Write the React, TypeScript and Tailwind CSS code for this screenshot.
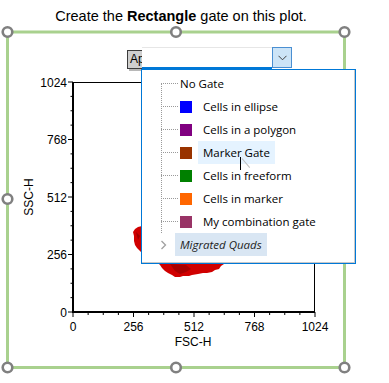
import React from "react";

const X0 = 73;
const X1 = 315;
const Y0 = 312;
const Y1 = 82;
const xs = (v: number) => X0 + (v / 1024) * (X1 - X0);
const ys = (v: number) => Y0 - (v / 1024) * (Y0 - Y1);
const majors = [0, 256, 512, 768, 1024];
const minors: number[] = [];
for (let v = 64; v < 1024; v += 64) if (v % 256 !== 0) minors.push(v);

function Plot() {
  const handles: [number, number][] = [
    [7.5, 32],
    [176, 32],
    [344.5, 32],
    [7.5, 199],
    [344.5, 199],
    [7.5, 367.5],
    [176, 367.5],
    [344.5, 367.5],
  ];
  const blob =
    "M142,226 L138,227 L135,229 L133,232 L134,236 L134,241 L135,245 L137,248 L139,250 L142,253 L150,258 L158,263 L160,265 L162,268 L165,271 L168,273 L172,275 L175,277 L180,277 L183,276 L189,276 L192,275 L198,274 L203,273 L207,273 L212,272 L215,270 L219,269 L221,266 L224,264 L230,256 L236,246 L238,232 L228,222 L200,216 L170,216 Z";
  return (
    <svg
      className="absolute left-0 top-0"
      width={389}
      height={383}
      viewBox="0 0 389 383"
      style={{ fontFamily: '"Liberation Sans", Arial, sans-serif' }}
    >
      <path d={blob} fill="#d00000" />
      <path d="M170,264 L175,271 L180,274 L186,272 L191,269 L186,265 Z" fill="#a80000" />
      <path d="M136,232 L138,240 L140,236 Z" fill="#a00000" />
      <line x1={X0} y1={Y1 + 0.5} x2={X1} y2={Y1 + 0.5} stroke="#000" strokeWidth={1} />
      <line x1={X1 - 0.5} y1={Y1} x2={X1 - 0.5} y2={Y0} stroke="#000" strokeWidth={1} />
      <line x1={X0} y1={Y1} x2={X0} y2={Y0 + 1} stroke="#000" strokeWidth={2} />
      <line x1={X0 - 1} y1={Y0} x2={X1} y2={Y0} stroke="#000" strokeWidth={2} />
      {majors.map((v) => (
        <g key={"ym" + v}>
          <line x1={X0 - 5} y1={ys(v)} x2={X0} y2={ys(v)} stroke="#000" strokeWidth={1} />
          <text x={67} y={ys(v) + 4.5} fontSize={12} textAnchor="end" fill="#000">
            {v}
          </text>
          <line x1={xs(v)} y1={Y0} x2={xs(v)} y2={Y0 + 5} stroke="#000" strokeWidth={1} />
          <text x={xs(v)} y={331} fontSize={12} textAnchor="middle" fill="#000">
            {v}
          </text>
        </g>
      ))}
      {minors.map((v) => (
        <g key={"mn" + v}>
          <line x1={X0 - 2.5} y1={ys(v)} x2={X0} y2={ys(v)} stroke="#000" strokeWidth={1} />
          <line x1={xs(v)} y1={Y0} x2={xs(v)} y2={Y0 + 3} stroke="#000" strokeWidth={1} />
        </g>
      ))}
      <text x={193} y={346} fontSize={12} textAnchor="middle" fill="#000">
        FSC-H
      </text>
      <text
        x={0}
        y={0}
        fontSize={12}
        textAnchor="middle"
        fill="#000"
        transform="translate(33 197) rotate(-90)"
      >
        SSC-H
      </text>
      <rect x={7.5} y={32} width={337} height={335.5} fill="none" stroke="#a9d18e" strokeWidth={3} />
      {handles.map(([cx, cy], i) => (
        <circle key={i} cx={cx} cy={cy} r={4.8} fill="#fff" stroke="#808080" strokeWidth={2.6} />
      ))}
    </svg>
  );
}

type Item = { label: string; color?: string; hover?: boolean };
const items: Item[] = [
  { label: "No Gate" },
  { label: "Cells in ellipse", color: "#0000ff" },
  { label: "Cells in a polygon", color: "#800080" },
  { label: "Marker Gate", color: "#993300", hover: true },
  { label: "Cells in freeform", color: "#008000" },
  { label: "Cells in marker", color: "#ff6600" },
  { label: "My combination gate", color: "#993366" },
];

function Dropdown() {
  return (
    <>
      <div className="absolute left-[127px] top-[50px] w-[17px] h-[19px] bg-[#cfcfcf] border border-[#3c3c3c] shadow-[2px_2px_0_#b8b8b8] text-[12px] leading-[17px] pl-[2px] text-black font-['Liberation_Sans',Arial,sans-serif]">
        Ap
      </div>
      <div className="absolute left-[142px] top-[47px] w-[150px] h-[22px] flex">
        <div className="flex-1 bg-white border-t border-[#e6e6e6] border-b-2 border-b-[#0078d7]" />
        <div className="w-[20px] h-[21px] bg-[#cce4f7] border border-[#4a8fd2] flex items-center justify-center">
          <svg width="9" height="6" viewBox="0 0 9 6">
            <path d="M0.5 0.8 L4.5 4.8 L8.5 0.8" fill="none" stroke="#404040" strokeWidth={1} />
          </svg>
        </div>
      </div>
      <div className="absolute left-[141px] top-[69px] w-[215px] h-[195px] border border-[#0078d7] bg-white shadow-[inset_-1px_-1px_0_#c8c8c8] font-['Open_Sans','Noto_Sans',sans-serif] text-[11.5px] text-black">
        <div className="absolute left-[19px] top-[14px] h-[149px] border-l border-dotted border-[#9a9a9a]" />
        <div className="flex flex-col pt-[2px]">
          {items.map((it) => (
            <div key={it.label} className="h-[23px] flex items-center">
              <div className="w-[19px]" />
              <div className="w-[17px] border-t border-dotted border-[#9a9a9a]" />
              {it.color ? (
                <>
                  <div className="ml-[2px] w-[12px] h-[12px]" style={{ backgroundColor: it.color }} />
                  <div
                    className={
                      "ml-[6px] h-[23px] px-[5px] flex items-center relative " +
                      (it.hover ? "bg-[#e5f3ff]" : "")
                    }
                  >
                    {it.label}
                    {it.hover && (
                      <>
                        <div className="absolute left-[42px] top-[16px] w-px h-[13px] bg-black" />
                        <div className="absolute left-[44px] top-[17px] w-[12px] h-px bg-[#c0c0c0] rotate-[50deg] origin-left" />
                      </>
                    )}
                  </div>
                </>
              ) : (
                <div className="ml-[2px]">{it.label}</div>
              )}
            </div>
          ))}
          <div className="h-[23px] flex items-center">
            <div className="w-[18px]" />
            <svg width="8" height="10" viewBox="0 0 8 10">
              <path d="M1.5 1 L5.5 5 L1.5 9" fill="none" stroke="#a0a0a0" strokeWidth={1.3} />
            </svg>
            <div className="ml-[7px] h-[23px] px-[5px] flex items-center bg-[#d9e6f3] italic text-[#1e1e1e]">
              Migrated Quads
            </div>
          </div>
        </div>
      </div>
    </>
  );
}

export default function App() {
  return (
    <div className="relative w-[389px] h-[383px] bg-white overflow-hidden">
      <div className="w-[362px] pt-[8px] text-center text-[14.5px] leading-[16px] text-black font-['Liberation_Sans',Arial,sans-serif]">
        Create the <b>Rectangle</b> gate on this plot.
      </div>
      <Plot />
      <Dropdown />
    </div>
  );
}
